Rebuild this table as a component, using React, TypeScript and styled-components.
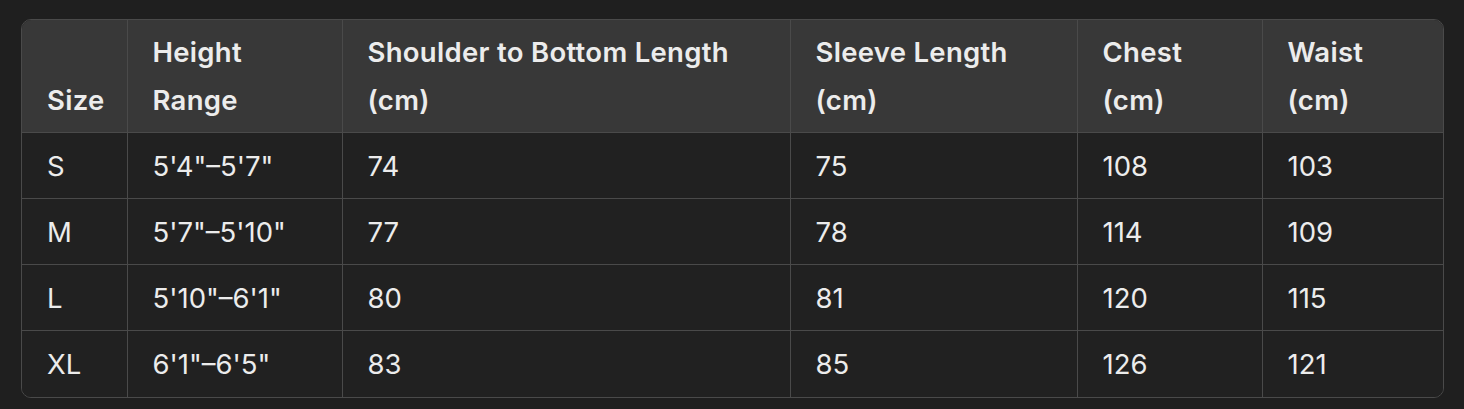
import React from "react";
import styled, { createGlobalStyle } from "styled-components";

const Global = createGlobalStyle`
  html, body { margin: 0; padding: 0; background: #1f1f1f; }
  body { font-family: Inter, "Noto Sans", sans-serif; color: #ececec; }
`;

const Page = styled.div`
  width: 1464px;
  height: 409px;
  box-sizing: border-box;
  padding: 19px 20px 0 21px;
  background: #1f1f1f;
`;

const Frame = styled.div`
  width: 1423px;
  box-sizing: border-box;
  border: 1.5px solid #4a4a4a;
  border-radius: 10px;
  overflow: hidden;
`;

const Table = styled.table`
  width: 100%;
  border-collapse: collapse;
  table-layout: fixed;
  font-size: 27.5px;
`;

const HeadCell = styled.th`
  background: #383838;
  font-weight: 600;
  letter-spacing: 0.3px;
  text-align: left;
  vertical-align: bottom;
  line-height: 48px;
  height: 110px;
  box-sizing: border-box;
  padding: 8px 10px 8px 25px;
  border-bottom: 1.5px solid #4a4a4a;
  border-right: 1.5px solid #4a4a4a;
  white-space: nowrap;
  &:last-child { border-right: none; }
`;

const Cell = styled.td`
  background: #212121;
  font-weight: 400;
  height: 66px;
  box-sizing: border-box;
  padding: 1px 10px 0 25px;
  border-bottom: 1.5px solid #4a4a4a;
  border-right: 1.5px solid #4a4a4a;
  white-space: nowrap;
  &:last-child { border-right: none; }
  tr:last-child > & { border-bottom: none; }
`;

const cols = [105, 215, 448, 287, 185, 182];
const headers = [
  ["Size"],
  ["Height", "Range"],
  ["Shoulder to Bottom Length", "(cm)"],
  ["Sleeve Length", "(cm)"],
  ["Chest", "(cm)"],
  ["Waist", "(cm)"],
];
const rows = [
  ["S", "5'4\"–5'7\"", "74", "75", "108", "103"],
  ["M", "5'7\"–5'10\"", "77", "78", "114", "109"],
  ["L", "5'10\"–6'1\"", "80", "81", "120", "115"],
  ["XL", "6'1\"–6'5\"", "83", "85", "126", "121"],
];

export default function App() {
  return (
    <>
      <Global />
      <Page>
        <Frame>
          <Table>
            <colgroup>
              {cols.map((w, i) => (
                <col key={i} style={{ width: w }} />
              ))}
            </colgroup>
            <thead>
              <tr>
                {headers.map((h, i) => (
                  <HeadCell key={i}>
                    {h.map((line, j) => (
                      <React.Fragment key={j}>
                        {j > 0 && <br />}
                        {line}
                      </React.Fragment>
                    ))}
                  </HeadCell>
                ))}
              </tr>
            </thead>
            <tbody>
              {rows.map((r, i) => (
                <tr key={i}>
                  {r.map((c, j) => (
                    <Cell key={j}>{c}</Cell>
                  ))}
                </tr>
              ))}
            </tbody>
          </Table>
        </Frame>
      </Page>
    </>
  );
}
